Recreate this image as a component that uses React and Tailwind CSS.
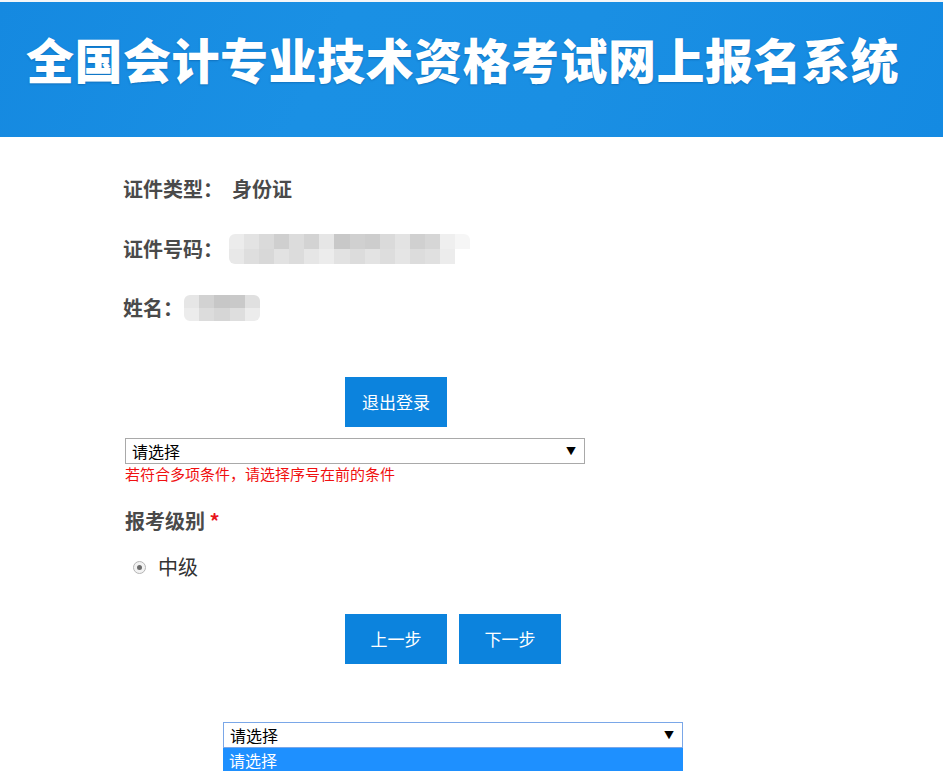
import React from "react";

const font = { fontFamily: '"Noto Sans CJK SC", "Noto Sans", sans-serif' };

// Pixelated mask over personal data
function Mosaic({ cols, shades, className }) {
  return (
    <div className={`grid overflow-hidden rounded-[6px] blur-[0.6px] ${className}`} style={{ gridTemplateColumns: `repeat(${cols}, 1fr)` }}>
      {shades.map((c, i) => (
        <div key={i} style={{ backgroundColor: c }} />
      ))}
    </div>
  );
}

const idShades = [
  "#ececec", "#e3e3e3", "#dadada", "#cfcfcf", "#dcdcdc", "#d3d3d3", "#e6e6e6", "#c8c8c8", "#d0d0d0", "#cdcdcd", "#dadada", "#e3e3e3", "#d0d0d0", "#d6d6d6", "#efefef", "#f6f6f6",
  "#e8e8e8", "#dedede", "#d8d8d8", "#e2e2e2", "#dcdcdc", "#e6e6e6", "#ececec", "#e2e2e2", "#dcdcdc", "#e3e3e3", "#dddddd", "#e5e5e5", "#dcdcdc", "#e0e0e0", "#ececec", "#ffffff",
];
const nameShades = [
  "#e6e6e6", "#d2d2d2", "#c7c7c7", "#c9c9c9", "#e0e0e0",
  "#ececec", "#dcdcdc", "#d6d6d6", "#dedede", "#ececec",
];

function Select({ focused }) {
  return (
    <div
      className={`flex h-[26px] w-[460px] items-center justify-between bg-white pl-[6px] pr-[8px] text-[16px] text-black ${
        focused ? "border border-[#7aa7e8]" : "border border-[#a9a9a9]"
      }`}
    >
      <span>请选择</span>
      <span className="text-[10px] leading-none">▼</span>
    </div>
  );
}

function BlueButton({ children }) {
  return (
    <button className="flex h-[50px] w-[102px] items-center justify-center bg-[#0c83dd] text-[17px] text-white">
      {children}
    </button>
  );
}

export default function App() {
  return (
    <div className="min-h-[771px] w-[943px] overflow-hidden bg-white" style={font}>
      <div className="h-[2px] bg-[#f4f6f8]" />
      <header className="flex h-[135px] items-center bg-[linear-gradient(115deg,#1589e0_0%,#1a90e4_35%,#1a8fe3_60%,#148ae2_100%)] pb-[24px] pl-[26px]">
        <h1 className="text-[48px] font-black leading-none tracking-[0.5px] text-white [text-shadow:0_1px_2px_rgba(0,60,120,0.35)]">
          全国会计专业技术资格考试网上报名系统
        </h1>
      </header>

      <div className="pl-[123px] pt-[39px] text-[20px] font-bold text-[#4a4a4a]">
        <div className="flex h-[26px] items-center">
          <span>证件类型：</span>
          <span className="ml-[9px]">身份证</span>
        </div>
        <div className="mt-[32px] flex h-[30px] items-center">
          <span>证件号码：</span>
          <Mosaic cols={16} shades={idShades} className="ml-[6px] h-[30px] w-[241px]" />
        </div>
        <div className="mt-[30px] flex h-[28px] items-center">
          <span>姓名：</span>
          <Mosaic cols={5} shades={nameShades} className="ml-[1px] h-[26px] w-[76px]" />
        </div>
      </div>

      <div className="mt-[55px] pl-[345px]">
        <BlueButton>退出登录</BlueButton>
      </div>

      <div className="mt-[11px] pl-[125px]">
        <Select />
        <div className="mt-[1px] text-[15px] leading-[18px] text-[#f01010]">若符合多项条件，请选择序号在前的条件</div>
      </div>

      <div className="mt-[23px] pl-[125px] text-[20px] font-bold text-[#4a4a4a]">
        报考级别 <span className="text-[#e8141c]">*</span>
      </div>

      <label className="mt-[16px] flex items-center pl-[133px] text-[20px] text-[#333]">
        <span className="flex h-[13px] w-[13px] items-center justify-center rounded-full border border-[#b5b5b5] bg-[#f2f2f2]">
          <span className="h-[5px] w-[5px] rounded-full bg-[#6b6b6b]" />
        </span>
        <span className="ml-[12px]">中级</span>
      </label>

      <div className="mt-[32px] flex gap-[12px] pl-[345px]">
        <BlueButton>上一步</BlueButton>
        <BlueButton>下一步</BlueButton>
      </div>

      <div className="mt-[58px] pl-[223px]">
        <Select focused />
        <div className="flex h-[24px] w-[460px] items-center bg-[#1e90ff] pl-[6px] text-[16px] text-white">请选择</div>
      </div>
    </div>
  );
}
